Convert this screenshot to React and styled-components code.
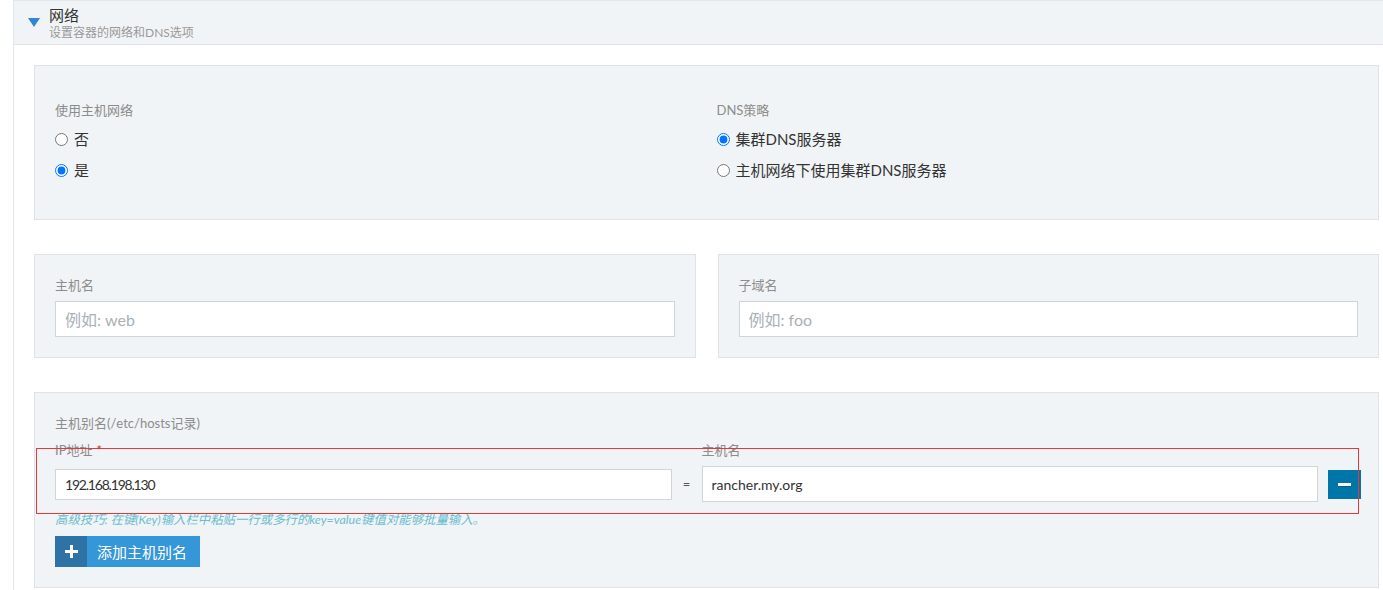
import React from "react";
import styled, { createGlobalStyle } from "styled-components";

const Global = createGlobalStyle`
  html, body { margin: 0; padding: 0; background: #fff; }
  body {
    font-family: Lato, "Noto Sans CJK SC", "Noto Sans", sans-serif;
    color: #333;
    overflow: hidden;
  }
  * { box-sizing: border-box; }
`;

const Wrapper = styled.div`
  margin-left: 13px;
  border-left: 1px solid #e3e7ea;
  min-height: 590px;
`;

const Header = styled.div`
  display: flex;
  align-items: flex-start;
  height: 45px;
  padding: 5px 0 0 14px;
  background: #f1f4f6;
  border-top: 1px solid #e3e7ea;
  border-bottom: 1px solid #dde3e6;
`;

const Triangle = styled.span`
  flex: none;
  width: 0;
  height: 0;
  margin-top: 12px;
  margin-right: 9px;
  border-left: 6px solid transparent;
  border-right: 6px solid transparent;
  border-top: 9px solid #2f86d2;
`;

const HeaderText = styled.div`
  display: flex;
  flex-direction: column;
`;

const Title = styled.div`
  font-size: 15px;
  line-height: 18px;
  color: #333;
`;

const Subtitle = styled.div`
  font-size: 12px;
  line-height: 16px;
  color: #999;
  margin-top: 1px;
`;

const Content = styled.div`
  padding: 20px 4px 0 20px;
  display: flex;
  flex-direction: column;
  gap: 34px;
`;

const Panel = styled.div`
  position: relative;
  background: #f0f4f6;
  border: 1px solid #dde3e6;
  padding: ${(p) => p.$pad};
`;

const TwoCols = styled.div`
  display: grid;
  grid-template-columns: 1fr 1fr;
  column-gap: ${(p) => p.$gap}px;
`;

const Label = styled.div`
  font-size: 13px;
  line-height: 18px;
  color: #8c8c8c;
  margin-bottom: ${(p) => p.$mb ?? 11}px;
`;

const RadioList = styled.div`
  display: flex;
  flex-direction: column;
  gap: 13px;
`;

const RadioRow = styled.label`
  display: flex;
  align-items: center;
  gap: 6px;
  font-size: 15px;
  line-height: 18px;
  color: #333;
`;

const Radio = styled.input.attrs({ type: "radio" })`
  width: 13px;
  height: 13px;
  margin: 0;
`;

const TextInput = styled.input`
  display: block;
  width: 100%;
  height: ${(p) => p.$h || 36}px;
  border: 1px solid #cfd6da;
  background: #fff;
  padding: 0 9px;
  font-family: Lato, "Noto Sans CJK SC", sans-serif;
  font-size: ${(p) => p.$fs || 16}px;
  letter-spacing: ${(p) => p.$ls || 0}px;
  color: #333;
  outline: none;
  &::placeholder { color: #aab0b4; letter-spacing: 0; }
`;

const HostGrid = styled.div`
  display: grid;
  grid-template-columns: 1fr 30px 1fr 43px;
  margin-right: -3px;
  align-items: center;
`;

const ColHead = styled.div`
  font-size: 13px;
  line-height: 18px;
  color: #8c8c8c;
  padding-bottom: 7px;
`;

const Req = styled.span`
  color: #e53935;
  margin-left: 4px;
`;

const Equals = styled.div`
  text-align: center;
  font-size: 13px;
  color: #555;
`;

const MinusBtn = styled.button`
  justify-self: end;
  width: 33px;
  height: 29px;
  border: none;
  padding: 0;
  background: #0075a8;
  display: flex;
  align-items: center;
  justify-content: center;
  cursor: pointer;
`;

const MinusBar = styled.span`
  width: 13px;
  height: 3px;
  background: #fff;
  box-shadow: 0 1px 0 rgba(0, 0, 0, 0.15);
`;

const Hint = styled.div`
  margin-top: 10px;
  font-size: 12.4px;
  line-height: 16px;
  font-style: italic;
  color: #6bbdd0;
`;

const AddBtn = styled.button`
  margin-top: 8px;
  display: inline-flex;
  height: 31px;
  border: none;
  padding: 0;
  background: #3596d8;
  color: #fff;
  cursor: pointer;
  font-family: Lato, "Noto Sans CJK SC", sans-serif;
  font-size: 15px;
`;

const AddIcon = styled.span`
  width: 32px;
  background: #2f72a6;
  display: flex;
  align-items: center;
  justify-content: center;
`;

const AddText = styled.span`
  display: flex;
  align-items: center;
  padding: 0 13px 0 10px;
`;

const Marker = styled.div`
  position: absolute;
  left: 1px;
  top: 55px;
  width: 1323px;
  height: 66px;
  border: 1px solid #e53935;
  pointer-events: none;
`;

export default function App() {
  return (
    <>
      <Global />
      <Wrapper>
        <Header>
          <Triangle />
          <HeaderText>
            <Title>网络</Title>
            <Subtitle>设置容器的网络和DNS选项</Subtitle>
          </HeaderText>
        </Header>
        <Content>
          <Panel $pad="35px 20px 40px">
            <TwoCols $gap={20}>
              <div>
                <Label>使用主机网络</Label>
                <RadioList>
                  <RadioRow>
                    <Radio name="host" />否
                  </RadioRow>
                  <RadioRow>
                    <Radio name="host" defaultChecked />是
                  </RadioRow>
                </RadioList>
              </div>
              <div>
                <Label>DNS策略</Label>
                <RadioList>
                  <RadioRow>
                    <Radio name="dns" defaultChecked />集群DNS服务器
                  </RadioRow>
                  <RadioRow>
                    <Radio name="dns" />主机网络下使用集群DNS服务器
                  </RadioRow>
                </RadioList>
              </div>
            </TwoCols>
          </Panel>

          <TwoCols $gap={22}>
            <Panel $pad="21px 20px 20px">
              <Label $mb={7}>主机名</Label>
              <TextInput placeholder="例如: web" />
            </Panel>
            <Panel $pad="21px 20px 20px">
              <Label $mb={7}>子域名</Label>
              <TextInput placeholder="例如: foo" />
            </Panel>
          </TwoCols>

          <Panel $pad="21px 20px 20px">
            <Label $mb={9}>主机别名(/etc/hosts记录)</Label>
            <HostGrid>
              <ColHead>
                IP地址<Req>*</Req>
              </ColHead>
              <span />
              <ColHead>主机名</ColHead>
              <span />
            </HostGrid>
            <HostGrid>
              <TextInput $h={31} $fs={14} $ls={-1.2} defaultValue="192.168.198.130" />
              <Equals>=</Equals>
              <TextInput $h={36} $fs={14} defaultValue="rancher.my.org" />
              <MinusBtn aria-label="remove">
                <MinusBar />
              </MinusBtn>
            </HostGrid>
            <Hint>高级技巧: 在键(Key)输入栏中粘贴一行或多行的key=value键值对能够批量输入。</Hint>
            <AddBtn>
              <AddIcon>
                <svg width="13" height="13" viewBox="0 0 13 13">
                  <rect x="5" y="0" width="3" height="13" fill="#fff" />
                  <rect x="0" y="5" width="13" height="3" fill="#fff" />
                </svg>
              </AddIcon>
              <AddText>添加主机别名</AddText>
            </AddBtn>
            <Marker />
          </Panel>
        </Content>
      </Wrapper>
    </>
  );
}
